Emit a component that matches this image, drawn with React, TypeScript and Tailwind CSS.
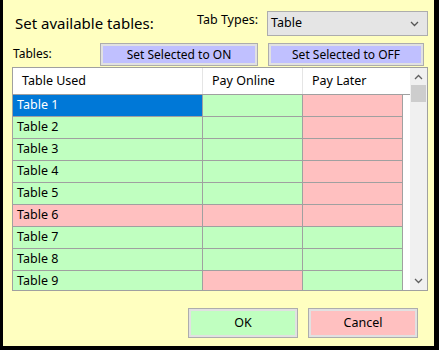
import { clsx } from "clsx";

type Cell = "g" | "r" | "sel";

const rows: { name: string; cells: [Cell, Cell, Cell] }[] = [
  { name: "Table 1", cells: ["sel", "g", "r"] },
  { name: "Table 2", cells: ["g", "g", "r"] },
  { name: "Table 3", cells: ["g", "g", "r"] },
  { name: "Table 4", cells: ["g", "g", "r"] },
  { name: "Table 5", cells: ["g", "g", "r"] },
  { name: "Table 6", cells: ["r", "r", "r"] },
  { name: "Table 7", cells: ["g", "g", "g"] },
  { name: "Table 8", cells: ["g", "g", "g"] },
  { name: "Table 9", cells: ["g", "r", "g"] },
];

const cellBg = (c: Cell) =>
  c === "sel" ? "bg-[#0078d7] text-white" : c === "g" ? "bg-[#c0ffc0]" : "bg-[#ffc0c0]";

function FlatButton({ label, fill, className }: { label: string; fill: string; className: string }) {
  return (
    <div className={clsx("border border-[#adadad] bg-[#e1e1e1] p-[2px]", className)}>
      <div className={clsx("flex h-full items-center justify-center", fill)}>{label}</div>
    </div>
  );
}

function Chevron({ up, className }: { up?: boolean; className?: string }) {
  return (
    <svg width="9" height="6" viewBox="0 0 9 6" className={className}>
      <polyline
        points={up ? "1,5 4.5,1.5 8,5" : "1,1 4.5,4.5 8,1"}
        fill="none"
        stroke="currentColor"
        strokeWidth="1.3"
      />
    </svg>
  );
}

export default function App() {
  return (
    <div className="h-[350px] w-[439px] bg-black">
      <div className="ml-[3px] flex h-[346px] w-[431px] flex-col bg-[#ffffc0] font-['Segoe_UI','Noto_Sans',sans-serif] text-[12px] text-black">
        <div className="flex h-[43px] pt-[11px]">
          <div className="ml-[12px] mt-[1px] w-[182px] text-[15px] leading-[22px]">Set available tables:</div>
          <div className="w-[70px] text-[12.5px] leading-[18px]">Tab Types:</div>
          <div className="flex h-[25px] w-[161px] items-center justify-between border border-[#adadad] bg-[#e5e5e5] pl-[3px] pr-[8px] text-[12.5px]">
            <span>Table</span>
            <Chevron className="text-[#555]" />
          </div>
        </div>

        <div className="flex h-[24px] items-start">
          <div className="ml-[10px] mt-[2px] w-[87px] leading-[18px]">Tables:</div>
          <FlatButton label="Set Selected to ON" fill="bg-[#c0c0ff]" className="h-[23px] w-[158px]" />
          <FlatButton label="Set Selected to OFF" fill="bg-[#c0c0ff]" className="ml-[10px] h-[23px] w-[156px]" />
        </div>

        <div className="ml-[9px] flex h-[224px] w-[416px] border border-[#a0a0a0] bg-white">
          <div className="w-[397px] overflow-hidden">
            <div className="flex h-[27px] border-b border-[#a0a0a0] bg-white text-[12.5px]">
              <div className="flex w-[190px] items-center border-r border-[#e5e5e5] pl-[9px]">Table Used</div>
              <div className="flex w-[100px] items-center border-r border-[#e5e5e5] pl-[9px]">Pay Online</div>
              <div className="flex w-[100px] items-center pl-[9px]">Pay Later</div>
            </div>
            {rows.map((r) => (
              <div key={r.name} className="flex h-[22px] text-[12.5px]">
                <div className={clsx("flex w-[190px] items-center border-b border-r border-[#a0a0a0] pl-[4px]", cellBg(r.cells[0]))}>
                  {r.name}
                </div>
                <div className={clsx("w-[100px] border-b border-r border-[#a0a0a0]", cellBg(r.cells[1]))} />
                <div className={clsx("w-[100px] border-b border-r border-[#a0a0a0]", cellBg(r.cells[2]))} />
              </div>
            ))}
          </div>
          <div className="flex w-[17px] flex-col items-center bg-[#f0f0f0]">
            <Chevron up className="mt-[6px] text-[#606060]" />
            <div className="mt-[5px] h-[17px] w-[15px] bg-[#cdcdcd]" />
            <div className="flex-1" />
            <Chevron className="mb-[6px] text-[#606060]" />
          </div>
        </div>

        <div className="mt-[17px] flex h-[30px] text-[12.5px]">
          <FlatButton label="OK" fill="bg-[#c0ffc0]" className="ml-[185px] h-[30px] w-[110px]" />
          <FlatButton label="Cancel" fill="bg-[#ffc0c0]" className="ml-[10px] h-[30px] w-[110px]" />
        </div>
      </div>
    </div>
  );
}
